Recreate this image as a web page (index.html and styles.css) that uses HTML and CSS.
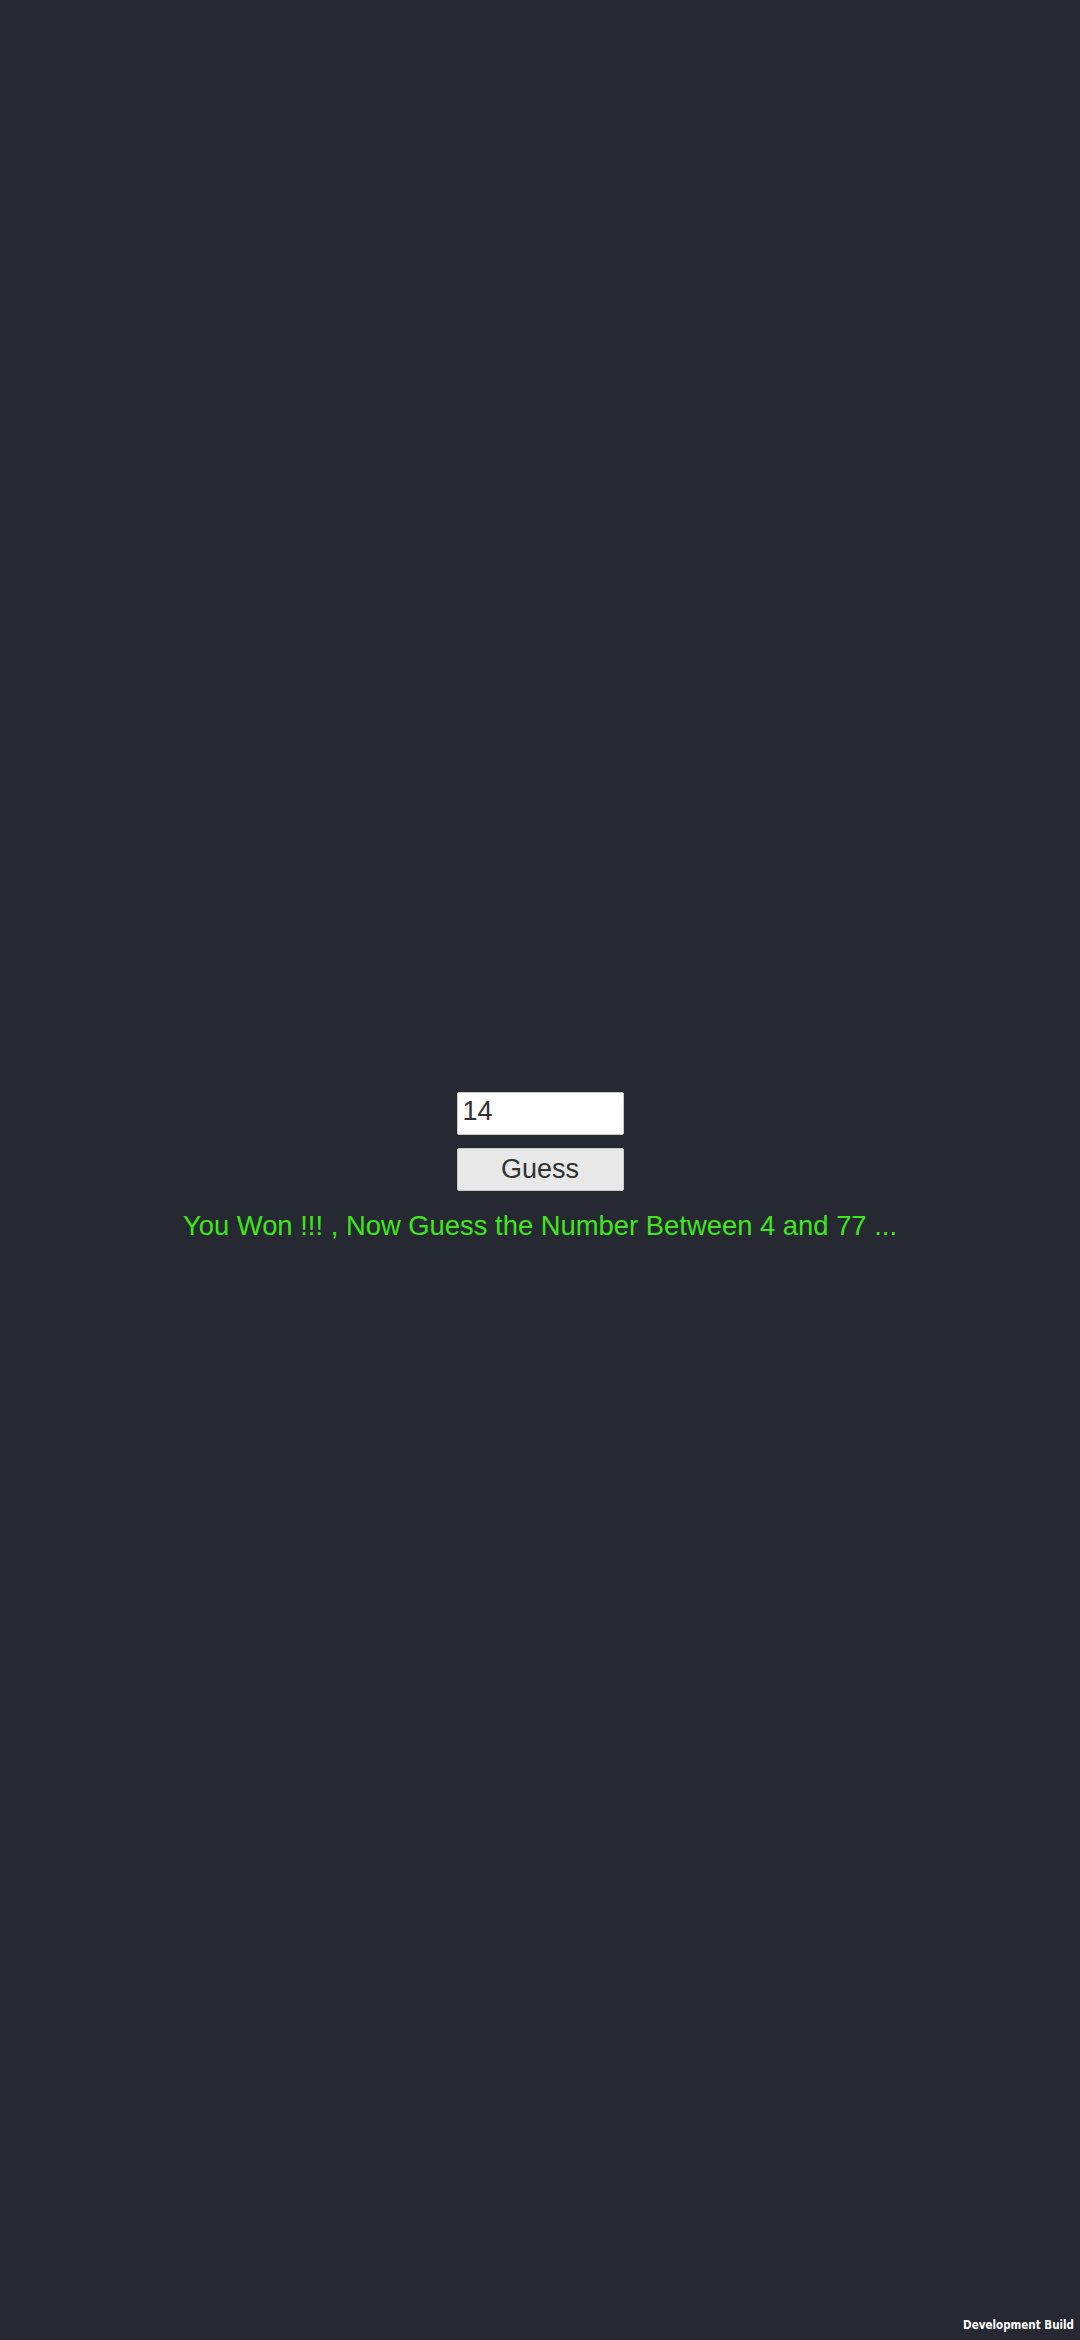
FILE: index.html
```html
<!DOCTYPE html>
<html>
<head>
<meta charset="utf-8">
<link rel="stylesheet" href="styles.css">
</head>
<body>
<main class="game">
  <div class="field">14</div>
  <button class="guess">Guess</button>
  <p class="message">You Won !!! , Now Guess the Number Between 4 and 77 ...</p>
</main>
<div class="build">Development Build</div>
</body>
</html>
```
FILE: styles.css
```css
html, body {
  margin: 0;
  padding: 0;
}
body {
  width: 1080px;
  height: 2340px;
  background: #262931;
  font-family: "Liberation Sans", Arial, sans-serif;
  position: relative;
  overflow: hidden;
}
.game {
  display: flex;
  flex-direction: column;
  align-items: center;
  padding-top: 1092px;
}
.field {
  box-sizing: border-box;
  width: 167px;
  height: 43px;
  background: #ffffff;
  border: 1px solid #c8c8c8;
  border-radius: 2px;
  color: #323232;
  font-size: 27px;
  line-height: 36px;
  padding-left: 5px;
}
.guess {
  box-sizing: border-box;
  margin-top: 13px;
  width: 167px;
  height: 43px;
  background: #e8e8e8;
  border: 1px solid #c8c8c8;
  border-radius: 2px;
  color: #323232;
  font-family: "Liberation Sans", Arial, sans-serif;
  font-size: 27px;
  line-height: 41px;
  padding: 0;
}
.message {
  margin: 19px 0 0;
  color: #3fe61c;
  font-size: 27.4px;
  line-height: 32px;
  white-space: nowrap;
}
.build {
  position: absolute;
  right: 6px;
  bottom: 8px;
  color: #ffffff;
  font-family: "DejaVu Sans Condensed", "DejaVu Sans", sans-serif;
  font-weight: bold;
  font-size: 11.5px;
}
```
